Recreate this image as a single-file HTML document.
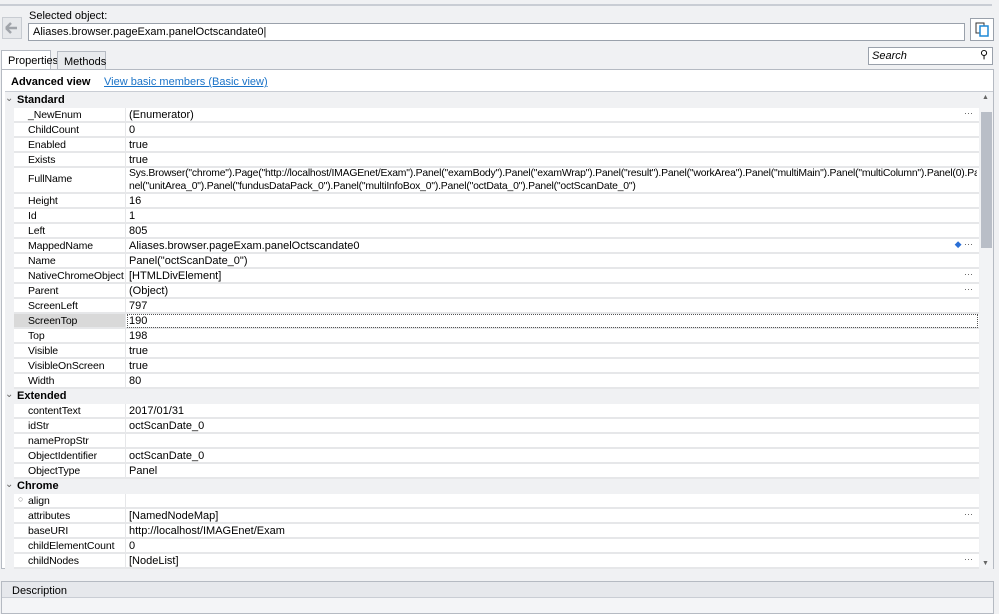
<!DOCTYPE html>
<html><head><meta charset="utf-8"><style>
*{margin:0;padding:0;box-sizing:border-box}
body{width:999px;height:614px;background:#f0f1f3;font-family:"Liberation Sans",sans-serif;font-size:11px;color:#000;position:relative;overflow:hidden}
.a{position:absolute}
.row{position:absolute;left:14px;width:965px;height:15px;border-bottom:2px solid #e6e7e9;background:#fff}
.row .n{position:absolute;left:14px;top:1px;white-space:nowrap;font-size:10.5px;letter-spacing:-0.1px}
.row .v{position:absolute;left:115px;top:1px;white-space:nowrap;width:848px;overflow:hidden}
.row .c{position:absolute;left:111px;top:0;width:1px;height:13px;background:#e6e7e9}
.cat{position:absolute;left:5px;width:975px;height:15px;background:#f0f1f3;font-weight:bold;font-size:11px}
.cat span{position:absolute;left:12px;top:1px}
.cat i{position:absolute;left:0;top:0;font-style:normal;font-weight:normal;color:#666;font-size:10px}
.dots{position:absolute;right:6px;top:0;color:#555;font-size:9px}
</style></head><body>
<div class="a" style="left:0;top:0;width:992px;height:6px;border-bottom:2px solid #c9cdd4"></div>
<div class="a" style="left:29px;top:10px;font-size:11px">Selected object:</div>
<div class="a" style="left:2px;top:17px;width:20px;height:22px;background:#e6e8eb;border:1px solid #c8ccd2"><svg width="18" height="20" viewBox="0 0 18 20"><path d="M3 10h11M3 10l5-5M3 10l5 5" stroke="#a0a4aa" stroke-width="2.5" fill="none"/></svg></div>
<div class="a" style="left:28px;top:23px;width:937px;height:18px;background:#fff;border:1px solid #9aa1ab;padding:2px 4px;font-size:11px">Aliases.browser.pageExam.panelOctscandate0|</div>
<div class="a" style="left:970px;top:18px;width:24px;height:23px;background:#fff;border:1px solid #9aa1ab">
<svg width="22" height="21" viewBox="0 0 22 21"><rect x="5" y="4" width="8" height="10" fill="#fff" stroke="#333" stroke-width="1"/><rect x="9" y="7" width="8" height="10" fill="#fff" stroke="#1e88d6" stroke-width="1.5"/></svg></div>
<div class="a" style="left:1px;top:50px;width:50px;height:20px;background:#fff;border:1px solid #b5bac2;border-bottom:none;padding:4px 0 0 6px">Properties</div>
<div class="a" style="left:57px;top:51px;width:49px;height:19px;background:#e8eaed;border:1px solid #b5bac2;padding:4px 0 0 6px">Methods</div>
<div class="a" style="left:868px;top:47px;width:125px;height:18px;background:#fff;border:1px solid #9aa1ab;padding:2px 3px;font-style:italic">Search<span style="position:absolute;right:4px;top:0;font-style:normal">⚲</span></div>
<div class="a" style="left:1px;top:69px;width:993px;height:500px;background:#fff;border:1px solid #b5bac2"></div>
<div class="a" style="left:11px;top:76px;font-weight:bold">Advanced view</div>
<div class="a" style="left:104px;top:76px;color:#1a73c8;text-decoration:underline">View basic members (Basic view)</div>
<div class="a" style="left:5px;top:91px;width:988px;height:478px;background:#f0f1f3;border-top:1px solid #c9cdd4"></div>
<div class="a" style="left:980px;top:92px;width:13px;height:476px;background:#f2f3f5"></div>
<div class="a" style="left:981px;top:112px;width:11px;height:136px;background:#b9bec7"></div>
<div class="a" style="left:982px;top:94px;font-size:7px;color:#666">▲</div>
<div class="a" style="left:982px;top:560px;font-size:7px;color:#666">▼</div>
<div id="g"></div>
<div class="a" style="left:1px;top:581px;width:993px;height:33px;background:#f4f5f7;border:1px solid #b5bac2"></div>
<div class="a" style="left:2px;top:582px;width:991px;height:16px;background:#e6e8ec;border-bottom:1px solid #c9cdd4;padding:3px 0 0 10px">Description</div>
<script>
var d=[["c","Standard"],["_NewEnum","(Enumerator)",1],["ChildCount","0"],["Enabled","true"],["Exists","true"],
["FullName","Sys.Browser(\"chrome\").Page(\"http://localhost/IMAGEnet/Exam\").Panel(\"examBody\").Panel(\"examWrap\").Panel(\"result\").Panel(\"workArea\").Panel(\"multiMain\").Panel(\"multiColumn\").Panel(0).Panel(\"multiBox_0\").Pa<br>nel(\"unitArea_0\").Panel(\"fundusDataPack_0\").Panel(\"multiInfoBox_0\").Panel(\"octData_0\").Panel(\"octScanDate_0\")",0,2],
["Height","16"],["Id","1"],["Left","805"],["MappedName","Aliases.browser.pageExam.panelOctscandate0",2],["Name","Panel(\"octScanDate_0\")"],["NativeChromeObject","[HTMLDivElement]",1],["Parent","(Object)",1],["ScreenLeft","797"],["ScreenTop","190",3],["Top","198"],["Visible","true"],["VisibleOnScreen","true"],["Width","80"],
["c","Extended"],["contentText","2017/01/31"],["idStr","octScanDate_0"],["namePropStr",""],["ObjectIdentifier","octScanDate_0"],["ObjectType","Panel"],
["c","Chrome"],["align","",4],["attributes","[NamedNodeMap]",1],["baseURI","http://localhost/IMAGEnet/Exam"],["childElementCount","0"],["childNodes","[NodeList]",1]];
var y=93,h="";
d.forEach(function(r){
 if(r[0]=="c"){h+='<div class="cat" style="top:'+y+'px"><i>&#8964;</i><span>'+r[1]+'</span></div>';y+=15;return;}
 var hh=r[3]==2?26:15;
 var f=r[2];
 var nm=r[0];
 if(f==4)nm='<span style="position:absolute;left:-10px;top:-1px;color:#888;font-size:9px">&#9675;</span>'+nm;
 h+='<div class="row" style="top:'+y+'px;height:'+hh+'px">'+
 (f==3?'<span style="position:absolute;left:0;top:0;width:112px;height:13px;background:#d9d9d9"></span><span style="position:absolute;left:113px;top:0;width:851px;height:14px;border:1px dotted #555"></span>':'')+
 '<span class="n" style="'+(r[3]==2?'top:5px':'')+'">'+nm+'</span><span class="c" style="height:'+(hh-2)+'px"></span>'+
 '<span class="v" style="'+(r[3]==2?'top:0;font-size:10.4px;line-height:12.5px;white-space:normal;letter-spacing:-0.2px':'')+'">'+r[1]+'</span>'+
 (f==1?'<span class="dots">···</span>':'')+(f==2?'<span class="dots"><span style="color:#2a6fd6;font-size:9px">◆</span> ···</span>':'')+'</div>';
 y+=hh;
});
document.getElementById('g').outerHTML=h;
</script>
</body></html>
